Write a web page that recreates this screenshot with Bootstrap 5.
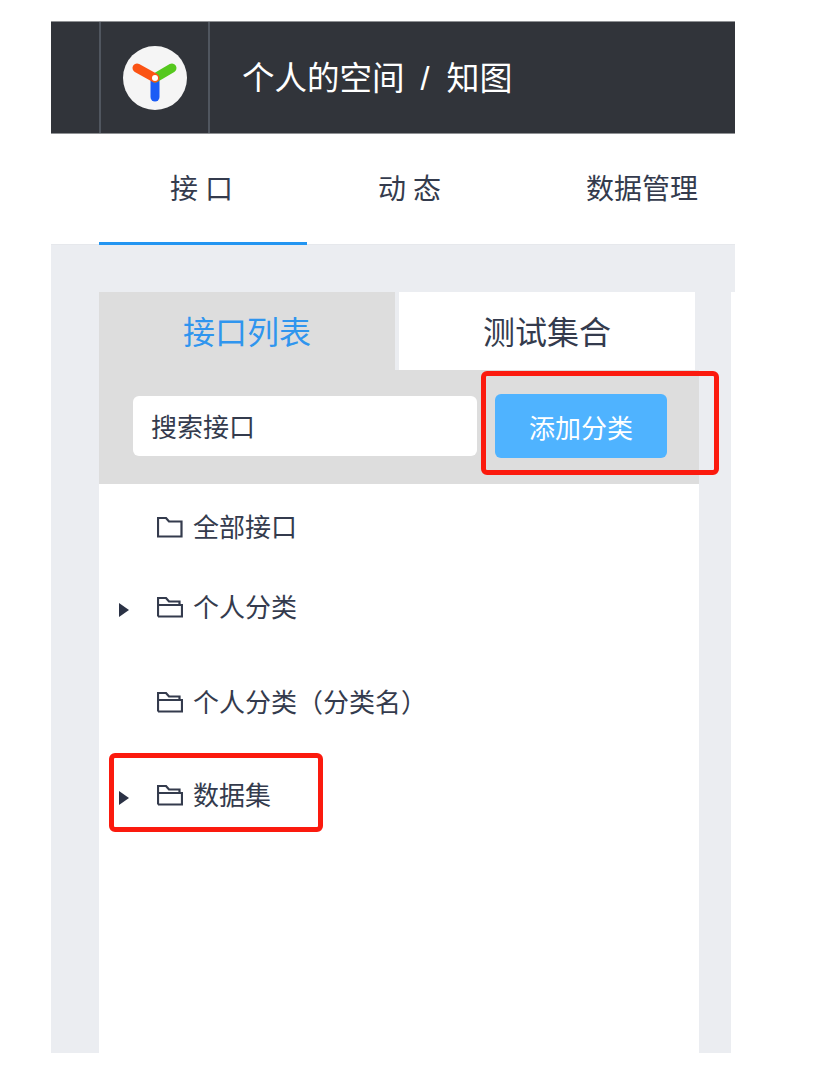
<!DOCTYPE html>
<html lang="zh">
<head>
    <meta charset="UTF-8">
    <title>接口列表</title>
    <link href="https://cdn.jsdelivr.net/npm/bootstrap@5.3.0/dist/css/bootstrap.min.css" rel="stylesheet">
    <style>
        body {
            background-color: #ffffff;
            font-family: "Liberation Sans", "Noto Sans CJK SC", sans-serif;
            color: #343b4d;
        }
        .frame {
            position: relative;
            width: 684px;
            height: 1032px;
            margin: 21px 0 0 51px;
        }
        .top-bar {
            height: 113px;
            background-color: #31343a;
            border-top: 1px solid #8f9194;
            border-bottom: 1px solid #8f9194;
            color: #ffffff;
            font-size: 32.5px;
        }
        .bar-gap { width: 48px; height: 100%; }
        .logo-cell {
            width: 111px;
            height: 100%;
            border-left: 2px solid #50565f;
            border-right: 2px solid #50565f;
        }
        .crumbs { margin-left: 32px; padding-top: 3px; }
        .crumbs .sep { margin: 0 16px; }
        .crumbs .place { font-size: 33px; margin-left: 1px; }
        .main-tabs { height: 111px; padding-left: 48px; border-bottom: 1px solid #e6e8ec; }
        .main-tab {
            width: 208px;
            height: 111px;
            font-size: 28px;
            color: #343b4d;
            text-decoration: none;
        }
        .main-tab.on { border-bottom: 3px solid #2395f1; }
        .main-tab.spaced { letter-spacing: 7px; padding-left: 4px; }
        .main-tab.on.spaced { padding-top: 3px; }
        .main-tab.wide { padding-left: 46px; }
        .gray-strip { height: 47px; background-color: #ebedf1; }
        .work-row { height: 761px; }
        .side-gap { width: 48px; background-color: #ebedf1; }
        .right-gap { width: 32px; background-color: #ebedf1; }
        .panel { width: 600px; }
        .panel-tabs { height: 78px; background-color: #ebedf1; padding-right: 4px; gap: 4px; }
        .panel-tab { flex: 1; font-size: 32px; color: #343b4d; background-color: #ffffff; padding-top: 3px; }
        .panel-tab.on { color: #2f95ee; background-color: #dddddd; }
        .search-row { height: 114px; background-color: #dddddd; padding: 0 0 2px 34px; }
        .search-input {
            width: 344px;
            height: 60px;
            border: 0;
            border-radius: 6px;
            padding: 5px 18px 0;
            font-size: 26px;
            outline: none;
        }
        .search-input::placeholder { color: #343b4d; opacity: 1; }
        .add-btn {
            width: 172px;
            height: 64px;
            margin-left: 18px;
            padding-top: 8px;
            border: 0;
            border-radius: 6px;
            background-color: #4fb3ff;
            color: #ffffff;
            font-size: 26px;
        }
        .tree-row { padding-left: 20px; font-size: 26px; }
        .tree-row.r1 { height: 88px; }
        .tree-row.r2 { height: 72px; }
        .tree-row.r3 { height: 118px; }
        .tree-row.r4 { height: 68px; }
        .arrow-slot { width: 38px; }
        .folder { margin: -3px 10px 0 0; }
        .red-mark {
            position: absolute;
            border: 5px solid #fb1a0e;
            border-radius: 6px;
        }
        .red-mark.m1 { left: 430px; top: 350px; width: 238px; height: 104px; }
        .red-mark.m2 { left: 58px; top: 732px; width: 214px; height: 79px; }
    </style>
</head>
<body>
    <div class="frame">
        <div class="top-bar d-flex align-items-center">
            <div class="bar-gap"></div>
            <div class="logo-cell d-flex align-items-center justify-content-center">
                <svg width="66" height="66" viewBox="0 0 66 66">
                    <circle cx="33" cy="33" r="32" fill="#f5f5f5"/>
                    <g fill="none" stroke-width="9" stroke-linecap="round">
                        <path d="M33 34V52" stroke="#1a5cf5"/>
                        <path d="M33 33L50 23" stroke="#55c81e"/>
                        <path d="M33 33L15 23" stroke="#fb5314"/>
                    </g>
                    <circle cx="33" cy="33" r="3" fill="#ffffff"/>
                </svg>
            </div>
            <div class="crumbs">个人的空间<span class="sep">/</span><span class="place">知图</span></div>
        </div>

        <nav class="main-tabs d-flex">
            <a class="main-tab spaced on d-flex align-items-center justify-content-center" href="#">接口</a>
            <a class="main-tab spaced d-flex align-items-center justify-content-center" href="#">动态</a>
            <a class="main-tab wide d-flex align-items-center justify-content-center" href="#">数据管理</a>
        </nav>

        <div class="gray-strip"></div>
        <div class="work-row d-flex">
            <div class="side-gap"></div>
            <div class="panel">
                <div class="panel-tabs d-flex">
                    <div class="panel-tab on d-flex align-items-center justify-content-center">接口列表</div>
                    <div class="panel-tab d-flex align-items-center justify-content-center">测试集合</div>
                </div>
                <div class="search-row d-flex align-items-center">
                    <input class="search-input" type="text" placeholder="搜索接口">
                    <button class="add-btn" type="button">添加分类</button>
                </div>
                <div class="tree-row r1 d-flex align-items-center">
                    <span class="arrow-slot"></span>
                    <svg class="folder" width="26" height="22" viewBox="0 0 26 22"><use href="#folder-a"/></svg>
                    <span>全部接口</span>
                </div>
                <div class="tree-row r2 d-flex align-items-center">
                    <span class="arrow-slot"><svg width="10" height="14" viewBox="0 0 10 14"><path d="M0 0L10 7L0 14Z" fill="#2b3245"/></svg></span>
                    <svg class="folder" width="26" height="22" viewBox="0 0 26 22"><use href="#folder-b"/></svg>
                    <span>个人分类</span>
                </div>
                <div class="tree-row r3 d-flex align-items-center">
                    <span class="arrow-slot"></span>
                    <svg class="folder" width="26" height="22" viewBox="0 0 26 22"><use href="#folder-b"/></svg>
                    <span>个人分类（分类名）</span>
                </div>
                <div class="tree-row r4 d-flex align-items-center">
                    <span class="arrow-slot"><svg width="10" height="14" viewBox="0 0 10 14"><path d="M0 0L10 7L0 14Z" fill="#2b3245"/></svg></span>
                    <svg class="folder" width="26" height="22" viewBox="0 0 26 22"><use href="#folder-b"/></svg>
                    <span>数据集</span>
                </div>
            </div>
            <div class="right-gap"></div>
        </div>

        <div class="red-mark m1"></div>
        <div class="red-mark m2"></div>
    </div>

    <svg width="0" height="0" class="position-absolute">
        <defs>
            <g id="folder-a" fill="none" stroke="#343b4d" stroke-width="2.2">
                <path d="M1 20.500V2h8l3 3.500h12.500v15Z"/>
            </g>
            <g id="folder-b" fill="none" stroke="#343b4d" stroke-width="2.2">
                <path d="M1 20.500V2h8l3 3.500h10.500v3.500M1 9h24v11.500H1"/>
            </g>
        </defs>
    </svg>

    <script src="https://cdn.jsdelivr.net/npm/bootstrap@5.3.0/dist/js/bootstrap.bundle.min.js"></script>
</body>
</html>
